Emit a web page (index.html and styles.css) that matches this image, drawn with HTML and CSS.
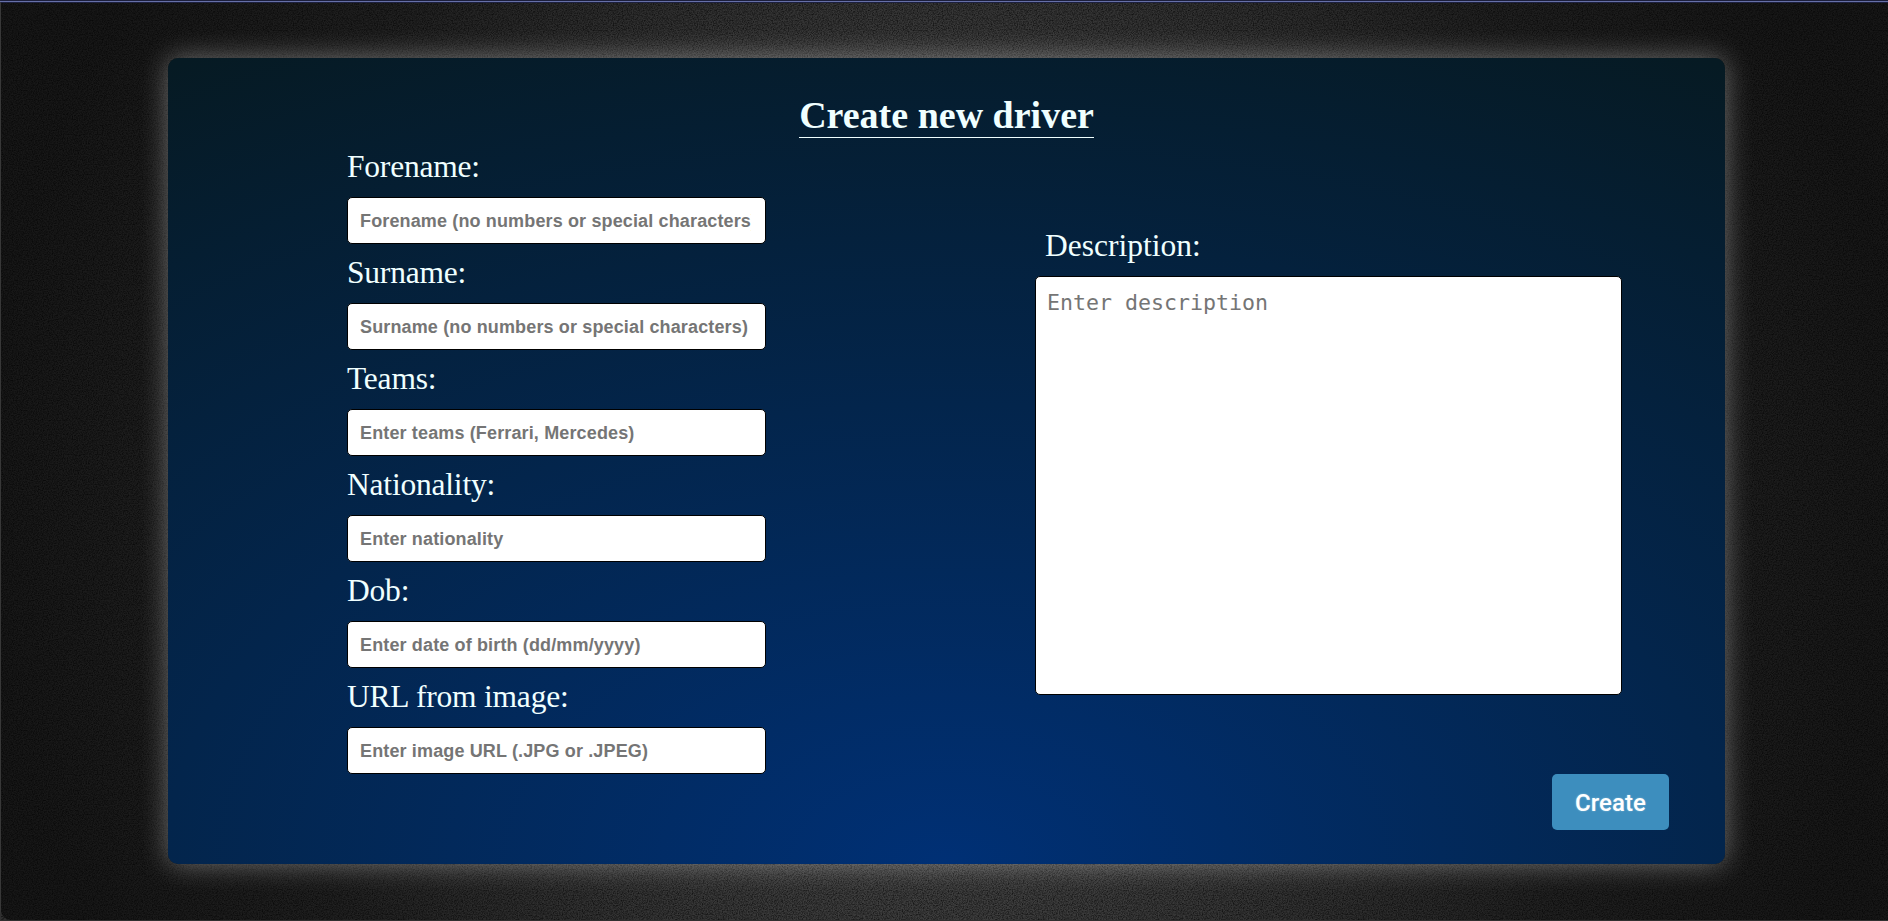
FILE: index.html
```html
<!DOCTYPE html>
<html lang="en">
<head>
<meta charset="utf-8">
<title>Create new driver</title>
<link rel="stylesheet" href="styles.css">
</head>
<body>
<div class="page">
  <svg class="grain" aria-hidden="true"><filter id="noise"><feTurbulence type="fractalNoise" baseFrequency="0.8" numOctaves="2"/><feColorMatrix values="0 0 0 0 0  0 0 0 0 0  0 0 0 0 0  1.3 0 0 0 -0.45"/></filter><rect width="100%" height="100%" filter="url(#noise)"/></svg>
  <form class="card">
    <h1 class="title">Create new driver</h1>
    <div class="columns">
      <div class="fields">
        <label class="label" for="forename">Forename:</label>
        <input class="input" id="forename" placeholder="Forename (no numbers or special characters)">
        <label class="label" for="surname">Surname:</label>
        <input class="input" id="surname" placeholder="Surname (no numbers or special characters)">
        <label class="label" for="teams">Teams:</label>
        <input class="input" id="teams" placeholder="Enter teams (Ferrari, Mercedes)">
        <label class="label" for="nationality">Nationality:</label>
        <input class="input" id="nationality" placeholder="Enter nationality">
        <label class="label" for="dob">Dob:</label>
        <input class="input" id="dob" placeholder="Enter date of birth (dd/mm/yyyy)">
        <label class="label" for="image">URL from image:</label>
        <input class="input" id="image" placeholder="Enter image URL (.JPG or .JPEG)">
      </div>
      <div class="side">
        <label class="label side-label" for="description">Description:</label>
        <textarea class="textarea" id="description" placeholder="Enter description"></textarea>
        <button class="button" type="button">Create</button>
      </div>
    </div>
  </form>
</div>
</body>
</html>
```
FILE: styles.css
```css
* { box-sizing: border-box; }

body {
  margin: 0;
  height: 921px;
  overflow: hidden;
  background: #303030;
}

.page {
  position: relative;
  height: 920px;
  padding: 55px 163px 0 167px;
  border-top: 3px solid #1c1f3c;
  border-left: 1px solid #383838;
  border-radius: 0 0 0 10px;
  background: radial-gradient(ellipse 960px 960px at 50% 54%, #585858 0%, #3e3e3e 42%, #202020 76%, #171717 100%);
}

.page::before {
  content: "";
  position: absolute;
  top: -2px;
  left: -1px;
  right: 0;
  height: 1px;
  background: #6670a8;
}

.grain {
  position: absolute;
  inset: 0;
  width: 100%;
  height: 100%;
}

.card {
  position: relative;
  width: 1557px;
  height: 806px;
  padding-top: 37px;
  border-radius: 10px;
  background: radial-gradient(ellipse 1560px 920px at 50% 100%, #003075 0%, #061a23 100%);
  box-shadow: 0 0 28px rgba(255, 255, 255, 0.38);
  color: azure;
  font-family: "Liberation Serif", serif;
}

.title {
  width: max-content;
  height: 43px;
  margin: 0 auto;
  border-bottom: 1px solid azure;
  font-size: 38px;
  line-height: 40px;
}

.columns {
  display: flex;
  justify-content: space-between;
  padding: 8px 56px 0 179px;
}

.fields {
  display: flex;
  flex-direction: column;
  width: 419px;
}

.label {
  height: 42px;
  font-size: 31.5px;
  line-height: 41px;
  letter-spacing: -0.2px;
}

.input {
  height: 47px;
  margin: 9px 0 8px;
  padding: 2px 14px 0 12px;
  border: 1px solid #000;
  border-radius: 5px;
  background: #fff;
  font: bold 18px "Liberation Sans", sans-serif;
  letter-spacing: 0.14px;
}

.input::placeholder,
.textarea::placeholder { color: #757575; }

.side {
  display: flex;
  flex-direction: column;
  width: 634px;
  padding-top: 79px;
}

.side-label {
  padding-left: 10px;
  letter-spacing: 0;
}

.textarea {
  width: 587px;
  height: 419px;
  margin-top: 9px;
  padding: 11px;
  border: 1px solid #000;
  border-radius: 5px;
  resize: none;
  font: 21.6px/30px "DejaVu Sans Mono", monospace;
}

.button {
  align-self: flex-end;
  width: 117px;
  height: 56px;
  margin-top: 79px;
  padding-top: 3px;
  border: 0;
  border-radius: 5px;
  background: #3d8ebe;
  color: #fff;
  font: 500 24px Roboto, sans-serif;
  letter-spacing: 0.1px;
  text-shadow: 0 0 2px rgba(255, 255, 255, 0.4);
}
```
